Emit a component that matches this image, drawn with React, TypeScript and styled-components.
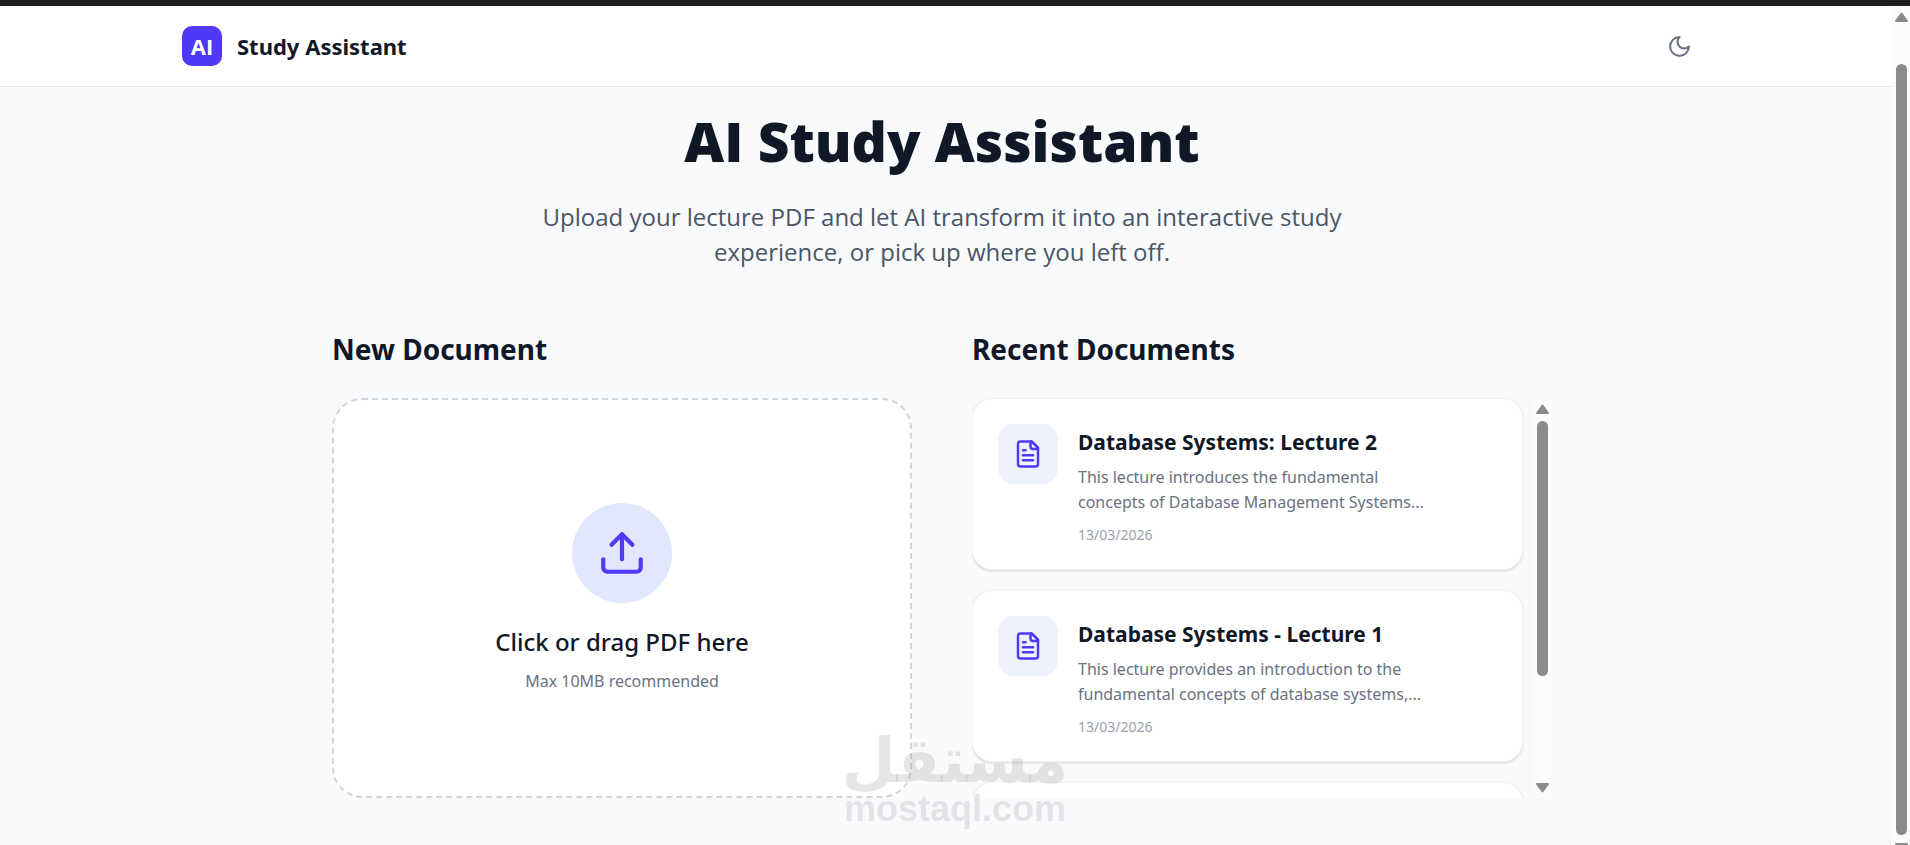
import React from 'react';
import styled, { createGlobalStyle } from 'styled-components';
import { Upload } from 'lucide-react';

const GlobalStyle = createGlobalStyle`
  *, *::before, *::after { box-sizing: border-box; }
  body {
    margin: 0;
    background: #f9fafc;
    color: #101828;
    font-family: "Noto Sans", "Open Sans", sans-serif;
  }
  h1, h2, h3, p, ul { margin: 0; padding: 0; }
`;

const Window = styled.div`
  position: relative;
  display: flex;
  flex-direction: column;
  height: 100vh;
  overflow: hidden;
  border-top: 6px solid #1f1f1f;
`;

const Viewport = styled.div`
  flex: 1;
  min-height: 0;
  display: flex;
`;

const Page = styled.div`
  flex: 1;
  min-width: 0;
`;

const Header = styled.header`
  padding-right: 8px;
  background: #fff;
  border-bottom: 1px solid #e5e7eb;
`;

const HeaderInner = styled.div`
  display: flex;
  align-items: center;
  justify-content: space-between;
  max-width: 1600px;
  height: 80px;
  margin: 0 auto;
  padding: 0 40px;
`;

const Brand = styled.a`
  display: flex;
  align-items: center;
  gap: 15px;
  color: #101828;
  font-size: 22px;
  font-weight: 700;
  line-height: 40px;
  text-decoration: none;
`;

const BrandMark = styled.span`
  width: 40px;
  height: 40px;
  border-radius: 10px;
  background: #4f39f6;
  color: #fff;
  font-family: "Open Sans", "Noto Sans", sans-serif;
  text-align: center;
`;

const ThemeButton = styled.button`
  display: flex;
  padding: 10px;
  border: 0;
  border-radius: 50%;
  background: none;
  color: #6a7282;
  cursor: pointer;
`;

const Main = styled.main`
  padding: 24px 8px 0 0;
`;

const Hero = styled.section`
  max-width: 840px;
  margin: 0 auto 60px;
  font-family: "Open Sans", "Noto Sans", sans-serif;
  text-align: center;
`;

const HeroTitle = styled.h1`
  margin-bottom: 28px;
  font-size: 55px;
  font-weight: 800;
  line-height: 60px;
`;

const HeroText = styled.p`
  color: #4a5565;
  font-size: 24px;
  line-height: 35px;
`;

const Columns = styled.div`
  display: grid;
  grid-template-columns: 1fr 1fr;
  gap: 60px;
  max-width: 1280px;
  margin: 0 auto;
  padding: 0 30px;
`;

const SectionTitle = styled.h2`
  margin-bottom: 29px;
  font-size: 28px;
  font-weight: 700;
  line-height: 40px;
`;

const DropZone = styled.button`
  display: flex;
  flex-direction: column;
  align-items: center;
  justify-content: center;
  width: 100%;
  height: 400px;
  border: 2px dashed #d1d5dc;
  border-radius: 30px;
  background: #fff;
  color: #101828;
  font-family: inherit;
  cursor: pointer;
`;

const UploadBadge = styled.span`
  display: grid;
  place-items: center;
  width: 100px;
  height: 100px;
  margin-bottom: 24px;
  border-radius: 50%;
  background: #e0e7ff;
  color: #4f39f6;
`;

const DropTitle = styled.span`
  margin-bottom: 12px;
  font-size: 24px;
  font-weight: 500;
  line-height: 30px;
`;

const DropHint = styled.span`
  color: #6a7282;
  font-size: 16px;
  line-height: 24px;
`;

const Recents = styled.div`
  display: flex;
  height: 400px;
`;

const DocList = styled.ul`
  flex: 1;
  display: flex;
  flex-direction: column;
  gap: 20px;
  padding-right: 10px;
  overflow: hidden;
  list-style: none;
`;

const DocCard = styled.li`
  flex: none;
  display: flex;
  gap: 20px;
  padding: 25px;
  border: 1px solid #f3f4f6;
  border-radius: 20px;
  background: #fff;
  box-shadow: 0 1px 3px rgba(0, 0, 0, 0.1), 0 1px 2px rgba(0, 0, 0, 0.06);
`;

const EmptyCard = styled(DocCard)`
  height: 172px;
`;

const DocIcon = styled.span`
  flex: none;
  display: grid;
  place-items: center;
  width: 60px;
  height: 60px;
  border-radius: 16px;
  background: #eef2ff;
  color: #4f39f6;
`;

const DocBody = styled.div`
  flex: 1;
  max-width: 360px;
`;

const DocTitle = styled.h3`
  margin-bottom: 5px;
  font-size: 21px;
  font-weight: 700;
  line-height: 36px;
  white-space: nowrap;
`;

const DocSummary = styled.p`
  margin-bottom: 10px;
  color: #6a7282;
  font-size: 16px;
  line-height: 25px;
`;

const DocDate = styled.time`
  display: block;
  color: #99a1af;
  font-size: 14px;
  line-height: 19px;
`;

const ListRail = styled.div`
  display: flex;
  flex-direction: column;
  align-items: center;
  width: 19px;
  padding: 6px 0 5px;
  background: #fcfcfc;
`;

const ListThumb = styled.div`
  width: 11px;
  height: 255px;
  margin: 7px 0 auto;
  border-radius: 6px;
  background: #8b8b8b;
`;

const PageRail = styled.div`
  display: flex;
  flex-direction: column;
  align-items: center;
  width: 18px;
  padding-top: 6px;
  background: #fcfcfc;
`;

const PageThumb = styled.div`
  flex: 1;
  width: 11px;
  margin: 42px 0 8px;
  border-radius: 6px;
  background: #8b8b8b;
`;

const PageRailEnd = styled.div`
  height: 2px;
  overflow: hidden;
`;

const Arrow = styled.svg`
  flex: none;
  display: block;
  width: 13px;
  height: 10px;
  fill: #8b8b8b;
  stroke: #8b8b8b;
  stroke-width: 2;
  stroke-linejoin: round;
`;

const LineIcon = styled.svg`
  display: block;
  fill: none;
  stroke: currentColor;
  stroke-width: 2;
  stroke-linecap: round;
  stroke-linejoin: round;
`;

const Watermark = styled.div`
  position: absolute;
  left: 50%;
  bottom: 18px;
  transform: translateX(-50%);
  color: rgba(130, 132, 136, 0.2);
  font-weight: 700;
  text-align: center;
  pointer-events: none;
`;

const WatermarkName = styled.div`
  font-family: "DejaVu Sans", sans-serif;
  font-size: 62px;
  line-height: 60px;
`;

const WatermarkSite = styled.div`
  font-family: "Liberation Sans", sans-serif;
  font-size: 36px;
  line-height: 36px;
`;

const ArrowUp = () => (
  <Arrow viewBox="0 0 13 10" aria-hidden="true"><path d="M6.500 1.500 12 9H1Z" /></Arrow>
);

const ArrowDown = () => (
  <Arrow viewBox="0 0 13 10" aria-hidden="true"><path d="M6.500 8.500 12 1H1Z" /></Arrow>
);

const MoonIcon = () => (
  <LineIcon width="25" height="25" viewBox="0 0 24 24" aria-hidden="true">
    <path d="M12 3a6 6 0 0 0 9 9 9 9 0 1 1-9-9Z" />
  </LineIcon>
);

const FileIcon = () => (
  <LineIcon width="30" height="30" viewBox="0 0 24 24" aria-hidden="true">
    <path d="M15 2H6a2 2 0 0 0-2 2v16a2 2 0 0 0 2 2h12a2 2 0 0 0 2-2V7Z" />
    <path d="M14 2v4a2 2 0 0 0 2 2h4" />
    <path d="M10 9H8" />
    <path d="M16 13H8" />
    <path d="M16 17H8" />
  </LineIcon>
);

const documents = [
  {
    title: 'Database Systems: Lecture 2',
    summary: 'This lecture introduces the fundamental concepts of Database Management Systems...',
    date: '13/03/2026',
    iso: '2026-03-13',
  },
  {
    title: 'Database Systems - Lecture 1',
    summary: 'This lecture provides an introduction to the fundamental concepts of database systems,...',
    date: '13/03/2026',
    iso: '2026-03-13',
  },
];

export default function App() {
  return (
    <>
      <GlobalStyle />
      <Window>
        <Viewport>
          <Page>
            <Header>
              <HeaderInner>
                <Brand href="#">
                  <BrandMark>AI</BrandMark>
                  <span>Study Assistant</span>
                </Brand>
                <ThemeButton type="button" aria-label="Toggle dark mode">
                  <MoonIcon />
                </ThemeButton>
              </HeaderInner>
            </Header>
            <Main>
              <Hero>
                <HeroTitle>AI Study Assistant</HeroTitle>
                <HeroText>
                  Upload your lecture PDF and let AI transform it into an interactive study
                  experience, or pick up where you left off.
                </HeroText>
              </Hero>
              <Columns>
                <section>
                  <SectionTitle>New Document</SectionTitle>
                  <DropZone type="button">
                    <UploadBadge><Upload size={50} /></UploadBadge>
                    <DropTitle>Click or drag PDF here</DropTitle>
                    <DropHint>Max 10MB recommended</DropHint>
                  </DropZone>
                </section>
                <section>
                  <SectionTitle>Recent Documents</SectionTitle>
                  <Recents>
                    <DocList>
                      {documents.map((doc) => (
                        <DocCard key={doc.title}>
                          <DocIcon><FileIcon /></DocIcon>
                          <DocBody>
                            <DocTitle>{doc.title}</DocTitle>
                            <DocSummary>{doc.summary}</DocSummary>
                            <DocDate dateTime={doc.iso}>{doc.date}</DocDate>
                          </DocBody>
                        </DocCard>
                      ))}
                      <EmptyCard aria-hidden="true" />
                    </DocList>
                    <ListRail aria-hidden="true">
                      <ArrowUp />
                      <ListThumb />
                      <ArrowDown />
                    </ListRail>
                  </Recents>
                </section>
              </Columns>
            </Main>
          </Page>
          <PageRail aria-hidden="true">
            <ArrowUp />
            <PageThumb />
            <PageRailEnd><ArrowDown /></PageRailEnd>
          </PageRail>
        </Viewport>
        <Watermark>
          <WatermarkName lang="ar" dir="rtl">مستقل</WatermarkName>
          <WatermarkSite>mostaql.com</WatermarkSite>
        </Watermark>
      </Window>
    </>
  );
}
